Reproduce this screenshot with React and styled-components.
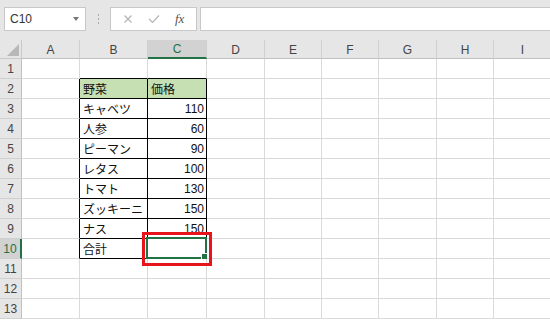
import styled, { createGlobalStyle } from 'styled-components';

const GlobalStyle = createGlobalStyle`
  body {
    margin: 0;
    background: #ffffff;
    font-family: "Liberation Sans", Arial, sans-serif;
  }
`;

const COLS = [
  { id: 'A', w: 58 },
  { id: 'B', w: 68 },
  { id: 'C', w: 59 },
  { id: 'D', w: 58 },
  { id: 'E', w: 57 },
  { id: 'F', w: 57 },
  { id: 'G', w: 58 },
  { id: 'H', w: 57 },
  { id: 'I', w: 58 },
];

const DATA = [
  ['野菜', '価格'],
  ['キャベツ', '110'],
  ['人参', '60'],
  ['ピーマン', '90'],
  ['レタス', '100'],
  ['トマト', '130'],
  ['ズッキーニ', '150'],
  ['ナス', '150'],
  ['合計', ''],
];

const Page = styled.div`
  width: 550px;
  height: 320px;
  overflow: hidden;
  display: flex;
  flex-direction: column;
`;

const Toolbar = styled.div`
  height: 40px;
  background: #e6e6e6;
  display: flex;
  align-items: center;
  padding: 0 0 2px 4px;
  box-sizing: border-box;
`;

const NameBox = styled.div`
  width: 82px;
  height: 24px;
  box-sizing: border-box;
  background: #fff;
  border: 1px solid #c8c8c8;
  display: flex;
  align-items: center;
  justify-content: space-between;
  padding: 0 6px 0 5px;
  font-size: 12px;
  color: #333;
`;

const Caret = styled.span`
  width: 0;
  height: 0;
  border-left: 3px solid transparent;
  border-right: 3px solid transparent;
  border-top: 4px solid #777;
`;

const Grip = styled.div`
  width: 24px;
  display: flex;
  flex-direction: column;
  align-items: center;
  gap: 2px;
  span {
    width: 1px;
    height: 2px;
    background: #aaa;
  }
`;

const FxBox = styled.div`
  width: 87px;
  height: 24px;
  box-sizing: border-box;
  background: #fff;
  border: 1px solid #c8c8c8;
  display: flex;
  align-items: center;
  justify-content: space-around;
  padding: 0 4px;
`;

const Fx = styled.span`
  font-family: "Liberation Serif", serif;
  font-style: italic;
  font-size: 13px;
  color: #555;
`;

const FormulaInput = styled.div`
  flex: 1;
  height: 24px;
  margin-left: 3px;
  box-sizing: border-box;
  background: #fff;
  border: 1px solid #c8c8c8;
  border-right: none;
`;

const Sheet = styled.div`
  display: grid;
  grid-template-columns: 22px ${COLS.map((c) => `${c.w}px`).join(' ')};
  grid-template-rows: 19px repeat(13, 20px);
`;

const Corner = styled.div`
  background: #e6e6e6;
  border-right: 1px solid #c8c8c8;
  border-bottom: 1px solid #c8c8c8;
  box-sizing: border-box;
  position: relative;
  &::after {
    content: '';
    position: absolute;
    right: 2px;
    bottom: 2px;
    border-left: 12px solid transparent;
    border-bottom: 12px solid #b8b8b8;
  }
`;

const ColHead = styled.div`
  background: ${(p) => (p.$sel ? '#d2d2d2' : '#e6e6e6')};
  color: ${(p) => (p.$sel ? '#217346' : '#444')};
  border-bottom: ${(p) => (p.$sel ? '2px solid #217346' : '1px solid #c0c0c0')};
  border-right: 1px solid #d0d0d0;
  box-sizing: border-box;
  display: flex;
  align-items: center;
  justify-content: center;
  font-size: 12px;
  padding-top: 1px;
`;

const RowHead = styled.div`
  background: ${(p) => (p.$sel ? '#d2d2d2' : '#e6e6e6')};
  color: ${(p) => (p.$sel ? '#217346' : '#444')};
  border-right: ${(p) => (p.$sel ? '2px solid #217346' : '1px solid #c0c0c0')};
  border-bottom: 1px solid #d0d0d0;
  box-sizing: border-box;
  display: flex;
  align-items: center;
  justify-content: center;
  font-size: 12px;
`;

const Cell = styled.div`
  position: relative;
  box-sizing: border-box;
  border-right: 1px solid ${(p) => (p.$br ? '#000' : '#dadada')};
  border-bottom: 1px solid ${(p) => (p.$bb ? '#000' : '#dadada')};
  background: ${(p) => (p.$head ? '#c6e0b4' : '#fff')};
  display: flex;
  align-items: center;
  justify-content: ${(p) => (p.$num ? 'flex-end' : 'flex-start')};
  padding: 0 2px 0 3px;
  font-family: ${(p) =>
    p.$num
      ? '"Liberation Sans", Arial, sans-serif'
      : '"Noto Sans CJK JP", sans-serif'};
  font-size: 12px;
  color: #111;
  white-space: nowrap;
`;

const Selection = styled.div`
  position: absolute;
  left: -2px;
  top: -2px;
  right: -1px;
  bottom: -1px;
  border: 2px solid #217346;
  &::after {
    content: '';
    position: absolute;
    right: -3px;
    bottom: -3px;
    width: 5px;
    height: 5px;
    background: #217346;
    border: 1px solid #fff;
  }
`;

const Highlight = styled.div`
  position: absolute;
  left: -6px;
  top: -7px;
  right: -6px;
  bottom: -8px;
  border: 3px solid #e8141c;
  z-index: 2;
`;

const cellFor = (r, c) => {
  const inTable = r >= 2 && r <= 10;
  const isB = c === 'B';
  const isC = c === 'C';
  const props = {};
  if (inTable && (isB || isC)) {
    props.$br = true;
    props.$bb = true;
  }
  if (inTable && c === 'A') props.$br = true;
  if (r === 1 && (isB || isC)) props.$bb = true;
  let text = '';
  if (inTable && (isB || isC)) {
    text = DATA[r - 2][isB ? 0 : 1];
    if (r === 2) props.$head = true;
    if (isC && r > 2) props.$num = true;
  }
  return { props, text };
};

const App = () => {
  const rows = Array.from({ length: 13 }, (_, i) => i + 1);
  return (
    <Page>
      <GlobalStyle />
      <Toolbar>
        <NameBox>
          C10
          <Caret />
        </NameBox>
        <Grip>
          <span />
          <span />
          <span />
        </Grip>
        <FxBox>
          <svg width="10" height="10" viewBox="0 0 10 10">
            <path d="M1.5 1.5 L8.5 8.5 M8.5 1.5 L1.5 8.5" stroke="#b4b4b4" strokeWidth="1.2" />
          </svg>
          <svg width="12" height="10" viewBox="0 0 12 10">
            <path d="M1 5 L4.5 8.5 L11 1.5" stroke="#b4b4b4" strokeWidth="1.2" fill="none" />
          </svg>
          <Fx>fx</Fx>
        </FxBox>
        <FormulaInput />
      </Toolbar>
      <Sheet>
        <Corner />
        {COLS.map((c) => (
          <ColHead key={c.id} $sel={c.id === 'C'}>
            {c.id}
          </ColHead>
        ))}
        {rows.map((r) => [
          <RowHead key={`h${r}`} $sel={r === 10}>
            {r}
          </RowHead>,
          ...COLS.map((c) => {
            const { props, text } = cellFor(r, c.id);
            const active = r === 10 && c.id === 'C';
            return (
              <Cell key={`${c.id}${r}`} {...props}>
                {text}
                {active && <Selection />}
                {active && <Highlight />}
              </Cell>
            );
          }),
        ])}
      </Sheet>
    </Page>
  );
};

export default App;
